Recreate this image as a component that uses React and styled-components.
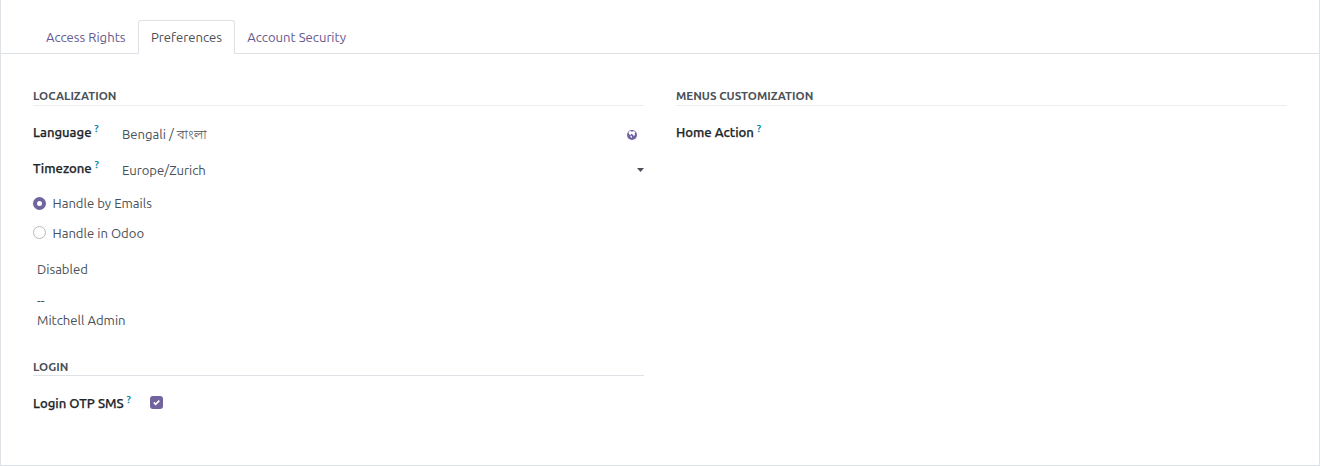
import React from "react";
import styled, { createGlobalStyle } from "styled-components";

const GlobalStyle = createGlobalStyle`
  * { box-sizing: border-box; }
  body {
    margin: 0;
    background: #fff;
    color: #495057;
    font-family: Ubuntu, "Noto Sans", "Open Sans", "Noto Sans Bengali", sans-serif;
    font-size: 13.125px;
    line-height: 20px;
  }
`;

const Sheet = styled.main`
  height: 466px;
  border: 1px solid #dee2e6;
  border-top: 0;
  padding-top: 20px;
`;

const TabBar = styled.nav`
  display: flex;
  height: 34px;
  padding-left: 32px;
  border-bottom: 1px solid #dee2e6;
`;

const Tab = styled.a`
  height: 34px;
  width: ${(p) => p.$width}px;
  padding: 6px 0 0 ${(p) => p.$inset || 12}px;
  white-space: nowrap;
  color: ${(p) => (p.$active ? "#495057" : "#66598f")};
  border: 1px solid ${(p) => (p.$active ? "#dee2e6" : "transparent")};
  border-bottom-color: ${(p) => (p.$active ? "#fff" : "transparent")};
  border-radius: 3px 3px 0 0;
`;

const Columns = styled.div`
  display: grid;
  grid-template-columns: 611px 611px;
  column-gap: 32px;
  padding: 34px 32px 0;
`;

const Heading = styled.h2`
  margin: 0 0 ${(p) => (p.$strong ? 17 : 16)}px;
  height: 18px;
  line-height: ${(p) => (p.$strong ? 18 : 16)}px;
  font-size: 11.57px;
  font-weight: 700;
  border-bottom: 1px solid ${(p) => (p.$strong ? "#dee2e6" : "#eceef0")};
`;

const Field = styled.div`
  display: flex;
  height: 36px;
`;

const Label = styled.label`
  display: flex;
  width: ${(p) => p.$width || 89}px;
  font-weight: 500;
  color: #212529;
  -webkit-text-stroke: 0.25px;
  white-space: nowrap;
`;

const Help = styled.sup`
  margin-left: 3px;
  font-size: 9.8px;
  line-height: 13px;
  font-weight: 500;
  color: #0180a5;
`;

const Value = styled.div`
  flex: 1;
  display: flex;
  justify-content: space-between;
  align-items: center;
  height: 20px;
  margin-top: 2px;
  padding-right: ${(p) => p.$end || 0}px;
`;

const Text = styled.span`
  white-space: nowrap;
`;

const Bengali = styled.span`
  font-weight: 300;
  font-size: 13.4px;
`;

const Caret = styled.i`
  width: 7px;
  height: 4px;
  background: #495057;
  clip-path: polygon(0 0, 100% 0, 50% 100%);
`;

const Options = styled.div`
  display: grid;
  gap: 10px;
  margin: -1px 0 16px;
`;

const Option = styled.label`
  display: flex;
  align-items: center;
  gap: 6.5px;
  height: 20px;
`;

const Radio = styled.span`
  width: 13px;
  height: 13px;
  margin-bottom: ${(p) => (p.$checked ? 0 : 1)}px;
  border-radius: 50%;
  background: #fff;
  border: ${(p) => (p.$checked ? "4px solid #71639e" : "1px solid #b8bbbe")};
`;

const Plain = styled.div`
  padding-left: 4px;
`;

const Signature = styled(Plain)`
  margin: 11px 0 28px;
`;

const Checkbox = styled.span`
  display: flex;
  width: 13px;
  height: 13px;
  margin-top: 3px;
  border-radius: 3px;
  background: #71639e;
`;

const GlobeIcon = styled.svg`
  margin-top: 1px;
`;

function Globe() {
  return (
    <GlobeIcon width="10" height="10" viewBox="0 0 10 10">
      <circle cx="5" cy="5" r="5" fill="#71639e" />
      <path d="M1.5 2.6 2.8 1.1 4.2 1 4.6 2.1 5.4 1.8 6 .9 7.8 1.6 8.4 2.8 7.6 3.5 8 4.6 7.4 5.7 6.3 5.5 5.6 4.5 4.6 3.8 3.8 4.6 2.9 4.9 2 4ZM3.4 5.5 4.8 6 5 6.9 4.1 7.9 3.6 7Z" fill="#fff" />
    </GlobeIcon>
  );
}

export default function App() {
  return (
    <>
      <GlobalStyle />
      <Sheet>
        <TabBar>
          <Tab $width={105}>Access Rights</Tab>
          <Tab $width={97} $active>Preferences</Tab>
          <Tab $width={123} $inset={11.3}>Account Security</Tab>
        </TabBar>
        <Columns>
          <section>
            <Heading>LOCALIZATION</Heading>
            <Field>
              <Label>Language<Help>?</Help></Label>
              <Value $end={7}><Text>Bengali / <Bengali>বাংলা</Bengali></Text><Globe /></Value>
            </Field>
            <Field>
              <Label>Timezone<Help>?</Help></Label>
              <Value><Text>Europe/Zurich</Text><Caret /></Value>
            </Field>
            <Options>
              <Option><Radio $checked /><Text>Handle by Emails</Text></Option>
              <Option><Radio /><Text>Handle in Odoo</Text></Option>
            </Options>
            <Plain><Text>Disabled</Text></Plain>
            <Signature><Text>--</Text><br /><Text>Mitchell Admin</Text></Signature>
            <Heading $strong>LOGIN</Heading>
            <Field>
              <Label $width={117}>Login OTP SMS<Help>?</Help></Label>
              <Checkbox>
                <svg width="13" height="13" viewBox="0 0 13 13">
                  <path d="m3.8 6.4 1.9 1.9 3.6-3.6" fill="none" stroke="#fff" strokeWidth="1.7" />
                </svg>
              </Checkbox>
            </Field>
          </section>
          <section>
            <Heading>MENUS CUSTOMIZATION</Heading>
            <Field>
              <Label>Home Action<Help>?</Help></Label>
            </Field>
          </section>
        </Columns>
      </Sheet>
    </>
  );
}
